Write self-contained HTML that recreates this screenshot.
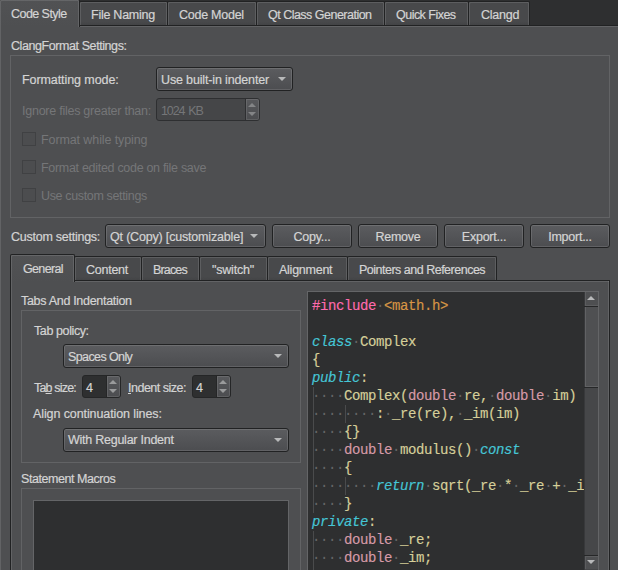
<!DOCTYPE html>
<html><head><meta charset="utf-8">
<style>
*{box-sizing:border-box;margin:0;padding:0}
html,body{width:618px;height:570px;overflow:hidden;background:#4e4f51;font-family:"Liberation Sans",sans-serif;font-size:12px;color:#d4d4d4}
.a{position:absolute}
.t{position:absolute;white-space:pre;line-height:14px;font-size:12.5px;letter-spacing:-0.25px;-webkit-text-stroke:0.2px currentColor}
.dis{color:#757678;-webkit-text-stroke:0}
.tab{position:absolute;background:linear-gradient(#48494b 0%,#48494b 85%,#434446 100%);border:1px solid #212223;border-bottom:none;border-radius:2px 2px 0 0;box-shadow:inset 1px 1px 0 rgba(255,255,255,.118),inset -1px 0 0 rgba(255,255,255,.118)}
.atab{position:absolute;background:linear-gradient(#515254,#4e4f51);border:1px solid #212223;border-bottom:none;border-radius:2px 2px 0 0;box-shadow:inset 1px 1px 0 rgba(255,255,255,.118),inset -1px 0 0 rgba(255,255,255,.118)}
.frame{position:absolute;border:1px solid #626365}
.combo{position:absolute;border:1px solid #212223;border-radius:3px;background:linear-gradient(#5b5c5f,#4c4d50);box-shadow:inset 0 0 0 1px rgba(255,255,255,.118)}
.arrow{position:absolute;width:0;height:0;border-left:4px solid transparent;border-right:4px solid transparent;border-top:4px solid #b8b9ba}
.btn{position:absolute;font-size:12.5px;letter-spacing:-0.25px;border:1px solid #212223;border-radius:3px;background:linear-gradient(#5b5c5f,#4c4d50);box-shadow:inset 0 0 0 1px rgba(255,255,255,.118);text-align:center;line-height:25px;-webkit-text-stroke:0.2px currentColor}
.cb{position:absolute;width:14px;height:14px;border:1px solid #404143;background:#4c4d4f}
.spin{position:absolute;border:1px solid #252627;border-radius:3px;background:#2e2f30}
.spinb{position:absolute;top:0;bottom:0;right:0;width:14px;border-left:1px solid #252627;background:linear-gradient(#58595c,#4c4d50);box-shadow:inset 0 0 0 1px rgba(255,255,255,.1);border-radius:0 2px 2px 0}
.up{position:absolute;width:0;height:0;border-left:4px solid transparent;border-right:4px solid transparent;border-bottom:4px solid #9a9b9c}
.dn{position:absolute;width:0;height:0;border-left:4px solid transparent;border-right:4px solid transparent;border-top:4px solid #9a9b9c}
#editor{left:307px;top:291px;width:292px;height:280px;background:#2e2f30;border:1px solid #646567;overflow:hidden}
.code{position:absolute;left:4px;top:5px;font-family:"Liberation Mono",monospace;font-size:14px;letter-spacing:-0.4px;line-height:18px;white-space:pre;color:#d6cf9a;-webkit-text-stroke:0.15px currentColor}
.kw{color:#45c6d6;font-style:italic}
.pt{color:#d69aa7}
.pp{color:#ff6aad}
.st{color:#d69545}
.ws{color:#656667;-webkit-text-stroke:0}
.g{position:absolute;width:1px;background:#4a4b4c}
</style></head><body>

<!-- outer tab strip -->
<div class="a" style="left:0;top:0;width:618px;height:25px;background:#2e2f30"></div>
<div class="a" style="left:0;top:25px;width:618px;height:1px;background:#212223"></div>
<div class="a" style="left:0;top:26px;width:618px;height:1px;background:#626365"></div>
<div class="a" style="left:0;top:0;width:1px;height:570px;background:#626365"></div>
<div class="atab" style="left:-1px;top:-1px;width:81px;height:28px"></div>
<div class="tab" style="left:79px;top:1px;width:89px;height:24px"></div>
<div class="tab" style="left:167px;top:1px;width:90px;height:24px"></div>
<div class="tab" style="left:256px;top:1px;width:129px;height:24px"></div>
<div class="tab" style="left:384px;top:1px;width:85px;height:24px"></div>
<div class="tab" style="left:468px;top:1px;width:62px;height:24px"></div>
<div class="t" style="left:11px;top:7px;letter-spacing:-0.55px">Code Style</div>
<div class="t" style="left:91px;top:8px">File Naming</div>
<div class="t" style="left:179px;top:8px">Code Model</div>
<div class="t" style="left:268px;top:8px;letter-spacing:-0.51px">Qt Class Generation</div>
<div class="t" style="left:396px;top:8px;letter-spacing:-0.52px">Quick Fixes</div>
<div class="t" style="left:481px;top:8px">Clangd</div>

<!-- ClangFormat group -->
<div class="t" style="left:11px;top:39px;letter-spacing:-0.42px">ClangFormat Settings:</div>
<div class="frame" style="left:10px;top:55px;width:600px;height:163px"></div>
<div class="t" style="left:22px;top:73px;letter-spacing:-0.08px">Formatting mode:</div>
<div class="combo" style="left:156px;top:67px;width:137px;height:24px"></div>
<div class="t" style="left:161px;top:73px;letter-spacing:-0.15px">Use built-in indenter</div>
<div class="arrow" style="left:278px;top:77px"></div>

<div class="t dis" style="left:22px;top:104px">Ignore files greater than:</div>
<div class="spin" style="left:156px;top:98px;width:104px;height:23px;background:#454648;border-color:#2e2f31"><div class="spinb" style="border-left-color:#2e2f31"><div class="up" style="left:2px;top:4px;border-bottom-color:#848587"></div><div class="dn" style="left:2px;top:13px;border-top-color:#848587"></div></div></div>
<div class="t dis" style="left:161px;top:104px;letter-spacing:-1.1px;word-spacing:1.5px">1024 KB</div>

<div class="cb" style="left:22px;top:132px"></div>
<div class="t dis" style="left:41px;top:133px;letter-spacing:-0.1px">Format while typing</div>
<div class="cb" style="left:22px;top:160px"></div>
<div class="t dis" style="left:41px;top:161px;letter-spacing:-0.3px">Format edited code on file save</div>
<div class="cb" style="left:22px;top:188px"></div>
<div class="t dis" style="left:41px;top:189px;letter-spacing:-0.35px">Use custom settings</div>

<!-- custom settings row -->
<div class="t" style="left:11px;top:230px">Custom settings:</div>
<div class="combo" style="left:105px;top:224px;width:161px;height:24px"></div>
<div class="t" style="left:110px;top:230px;letter-spacing:-0.18px">Qt (Copy) [customizable]</div>
<div class="arrow" style="left:250px;top:234px"></div>
<div class="btn" style="left:272px;top:224px;width:80px;height:24px">Copy...</div>
<div class="btn" style="left:358px;top:224px;width:80px;height:24px">Remove</div>
<div class="btn" style="left:444px;top:224px;width:80px;height:24px">Export...</div>
<div class="btn" style="left:530px;top:224px;width:80px;height:24px">Import...</div>

<!-- inner tab widget -->
<div class="a" style="left:10px;top:280px;width:600px;height:300px;border:1px solid #212223;box-shadow:inset 1px 1px 0 rgba(255,255,255,.118),inset -1px 0 0 rgba(255,255,255,.118)"></div>
<div class="atab" style="left:10px;top:254px;width:65px;height:28px"></div>
<div class="tab" style="left:74px;top:256px;width:68px;height:24px"></div>
<div class="tab" style="left:141px;top:256px;width:59px;height:24px"></div>
<div class="tab" style="left:199px;top:256px;width:69px;height:24px"></div>
<div class="tab" style="left:267px;top:256px;width:81px;height:24px"></div>
<div class="tab" style="left:347px;top:256px;width:150px;height:24px"></div>
<div class="t" style="left:23px;top:262px;letter-spacing:-0.65px">General</div>
<div class="t" style="left:86px;top:263px">Content</div>
<div class="t" style="left:153px;top:263px;letter-spacing:-0.85px">Braces</div>
<div class="t" style="left:212px;top:263px;letter-spacing:-0.2px">"switch"</div>
<div class="t" style="left:279px;top:263px">Alignment</div>
<div class="t" style="left:359px;top:263px;letter-spacing:-0.5px">Pointers and References</div>

<div class="t" style="left:21px;top:294px;letter-spacing:-0.3px">Tabs And Indentation</div>
<div class="frame" style="left:21px;top:310px;width:280px;height:153px"></div>
<div class="t" style="left:34px;top:324px;letter-spacing:-0.4px">Tab policy:</div>
<div class="combo" style="left:63px;top:344px;width:226px;height:24px"></div>
<div class="t" style="left:68px;top:350px;letter-spacing:-0.6px">Spaces Only</div>
<div class="arrow" style="left:274px;top:354px"></div>
<div class="t" style="left:34px;top:381px;letter-spacing:-0.82px">Ta<u>b</u> size:</div>
<div class="spin" style="left:82px;top:375px;width:39px;height:23px"><div class="spinb"><div class="up" style="left:2px;top:4px"></div><div class="dn" style="left:2px;top:13px"></div></div></div>
<div class="t" style="left:86px;top:381px">4</div>
<div class="t" style="left:128px;top:381px;letter-spacing:-0.5px"><u>I</u>ndent size:</div>
<div class="spin" style="left:192px;top:375px;width:39px;height:23px"><div class="spinb"><div class="up" style="left:2px;top:4px"></div><div class="dn" style="left:2px;top:13px"></div></div></div>
<div class="t" style="left:196px;top:381px">4</div>
<div class="t" style="left:33px;top:407px;letter-spacing:-0.1px">Align continuation lines:</div>
<div class="combo" style="left:63px;top:428px;width:226px;height:24px"></div>
<div class="t" style="left:68px;top:433px">With Regular Indent</div>
<div class="arrow" style="left:274px;top:438px"></div>

<div class="t" style="left:21px;top:472px;letter-spacing:-0.44px">Statement Macros</div>
<div class="frame" style="left:21px;top:488px;width:280px;height:100px"></div>
<div class="a" style="left:33px;top:500px;width:256px;height:80px;background:#2e2f30;border:1px solid #646567"></div>

<!-- editor -->
<div class="a" id="editor">
<div class="g" style="left:5px;top:95px;height:126px"></div>
<div class="g" style="left:5px;top:239px;height:40px"></div>
<div class="g" style="left:37px;top:113px;height:18px"></div>
<div class="g" style="left:37px;top:185px;height:18px"></div>
<div class="code"><span class="pp">#include</span><span class="ws">·</span><span class="st">&lt;math.h&gt;</span>

<span class="kw">class</span><span class="ws">·</span>Complex
{
<span class="kw">public</span>:
<span class="ws">····</span>Complex(<span class="pt">double</span><span class="ws">·</span>re,<span class="ws">·</span><span class="pt">double</span><span class="ws">·</span>im)
<span class="ws">········</span>:<span class="ws">·</span>_re(re),<span class="ws">·</span>_im(im)
<span class="ws">····</span>{}
<span class="ws">····</span><span class="pt">double</span><span class="ws">·</span>modulus()<span class="ws">·</span><span class="kw">const</span>
<span class="ws">····</span>{
<span class="ws">········</span><span class="kw">return</span><span class="ws">·</span>sqrt(_re<span class="ws">·</span>*<span class="ws">·</span>_re<span class="ws">·</span>+<span class="ws">·</span>_im<span class="ws">·</span>*<span class="ws">·</span>_im);
<span class="ws">····</span>}
<span class="kw">private</span>:
<span class="ws">····</span><span class="pt">double</span><span class="ws">·</span>_re;
<span class="ws">····</span><span class="pt">double</span><span class="ws">·</span>_im;</div>
</div>

<!-- scrollbar -->
<div class="a" style="left:584px;top:292px;width:14px;height:278px;background:#464749;border-left:1px solid #38393b"></div>
<div class="a" style="left:585px;top:292px;width:13px;height:14px;background:#4e4f51;box-shadow:inset 1px 0 0 #5c5d5f,inset 0 -1px 0 #5c5d5f"></div>
<div class="up" style="left:587px;top:296px;border-bottom-color:#b8b9ba"></div>
<div class="a" style="left:584px;top:306px;width:14px;height:1px;background:#262728"></div>
<div class="a" style="left:585px;top:307px;width:13px;height:80px;background:#4f5052;box-shadow:inset 1px 0 0 #616264,inset 0 -1px 0 #616264"></div>
<div class="a" style="left:584px;top:387px;width:14px;height:1px;background:#262728"></div>
<div class="a" style="left:584px;top:555px;width:14px;height:1px;background:#262728"></div>
<div class="a" style="left:585px;top:556px;width:13px;height:13px;background:#4e4f51;box-shadow:inset 1px 0 0 #5c5d5f,inset 0 1px 0 #5c5d5f"></div>
<div class="dn" style="left:587px;top:560px;border-top-color:#b8b9ba"></div>
</body></html>
